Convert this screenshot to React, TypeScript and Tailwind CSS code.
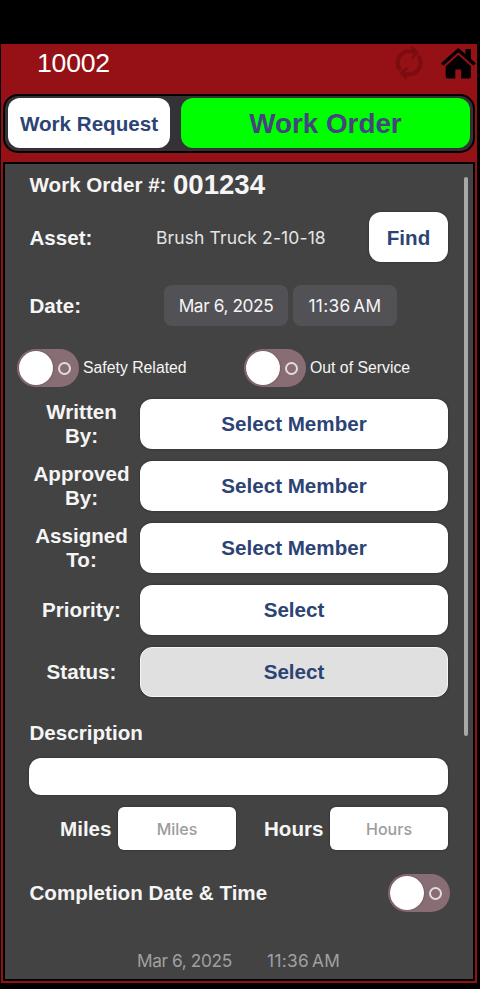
import React, { useState } from 'react';
import { clsx } from 'clsx';

interface SwitchProps {
  on: boolean;
  label: string;
  onChange: () => void;
}

const Switch: React.FC<SwitchProps> = ({ on, label, onChange }) => (
  <button
    role="switch"
    aria-checked={on}
    aria-label={label}
    onClick={onChange}
    className={clsx(
      'flex h-[38px] w-[62px] shrink-0 items-center justify-between rounded-full bg-[#886d74] pl-[2px] pr-[8px]',
      on && 'flex-row-reverse'
    )}
  >
    <span className="h-[34px] w-[34px] rounded-full bg-white shadow-[0_0_2px_#5c3f48]" />
    <span className="mt-px h-[13px] w-[13px] rounded-full border-2 border-[#e4dcde]" />
  </button>
);

const SELECTS = [
  { label: 'Written By:', value: 'Select Member' },
  { label: 'Approved By:', value: 'Select Member' },
  { label: 'Assigned To:', value: 'Select Member' },
  { label: 'Priority:', value: 'Select' },
  { label: 'Status:', value: 'Select', disabled: true },
];

const App: React.FC = () => {
  const [safety, setSafety] = useState(false);
  const [outOfService, setOutOfService] = useState(false);
  const [completed, setCompleted] = useState(false);

  return (
    <div className="h-[989px] w-[480px] overflow-hidden bg-black pl-px pr-[3px] pt-[44px] font-['Liberation_Sans',Arial,sans-serif] text-[20.6px] leading-6 text-[#f5f5f5]">
      <div className="flex h-[939px] flex-col bg-[#951116] px-[2px]">

        {/* Header */}
        <div className="flex h-[50px] shrink-0 items-start pl-[34px]">
          <h1 className="pt-[3px] text-[26.6px] leading-[32px] tracking-[-0.2px] text-white">10002</h1>
          <div className="ml-auto flex items-start">
            <svg className="mt-[1px] h-[36px] w-[30px]" viewBox="0 0 30 36" fill="none" stroke="#7d0c11">
              <path d="M5.4 25A11.5 11.5 0 0 1 20.5 8" strokeWidth="4" />
              <path d="M23.2 10.8A11.5 11.5 0 0 1 8 27.6" strokeWidth="4" />
              <path d="M16.2 1.8L22.4 7.8L16.6 13.2" strokeWidth="2.6" />
              <path d="M12.4 22.4L6 28L12 34" strokeWidth="2.6" />
            </svg>
            <svg className="ml-[16px] mr-[-1px] mt-[4px] h-[31px] w-[35px]" viewBox="0 0 35 31" fill="#000">
              <path d="M17.3 0L24.5 6V1H30V11L34.8 15.2L32.5 17.7L17.3 4.3L2.3 17.7L0 15.2Z" />
              <path d="M17.3 7L30 18.2V28.5Q30 30.5 28 30.5H20.2V21.5H14.3V30.5H6.7Q4.7 30.5 4.7 28.5V18.2Z" />
            </svg>
          </div>
        </div>

        {/* Tabs */}
        <div className="flex h-[59px] shrink-0 gap-[11px] rounded-[15px] border-2 border-black bg-[#343236] px-[3px] pt-[2px] font-bold">
          <button className="h-[50px] w-[162px] rounded-[12px] bg-white pt-[2px] text-[#2c4475]">Work Request</button>
          <button className="h-[50px] w-[289px] rounded-[12px] bg-[#00ff00] pt-[2px] text-[27.8px] text-[#45447f]">Work Order</button>
        </div>

        {/* Form */}
        <div className="mt-[9px] flex h-[819px] shrink-0 border-2 border-black bg-[#434343]">
          <div className="flex w-[443px] flex-col pl-[24px]">
            <div className="flex h-[40px] items-center pt-[2px] font-bold">
              <span className="ml-[0.5px]">Work Order #:</span>
              <span className="ml-[6.5px] text-[27.6px]">001234</span>
            </div>

            <div className="mt-[8px] flex h-[50px] items-center">
              <span className="w-[127px] pl-[0.5px] pt-[2px] font-bold">Asset:</span>
              <span className="pt-[2px] font-['Inter',sans-serif] text-[17.5px] tracking-[0.12px] text-[#e5e5e5]">Brush Truck 2-10-18</span>
              <button className="ml-auto h-[50px] w-[79px] rounded-[12px] bg-white pt-[2px] font-bold text-[#2c4475] shadow-[0_0_2px_#222]">Find</button>
            </div>

            <div className="mt-[23px] flex h-[41px] items-center">
              <span className="w-[135px] pl-[0.5px] font-bold">Date:</span>
              <button className="h-[41px] w-[124px] rounded-[8px] bg-[#525156] font-['Inter',sans-serif] text-[17.3px] tracking-[-0.4px]">Mar 6, 2025</button>
              <button className="ml-[5px] h-[41px] w-[104px] rounded-[8px] bg-[#525156] font-['Inter',sans-serif] text-[17.3px] tracking-[0.35px] [word-spacing:-2.5px]">11:36 AM</button>
            </div>

            <div className="ml-[-12px] mt-[23px] flex h-[38px] items-center text-[15.8px]">
              <Switch on={safety} label="Safety Related" onChange={() => setSafety(!safety)} />
              <span className="ml-[4px] w-[161px]">Safety Related</span>
              <Switch on={outOfService} label="Out of Service" onChange={() => setOutOfService(!outOfService)} />
              <span className="ml-[4px]">Out of Service</span>
            </div>

            <div className="mt-[12px] flex flex-col gap-[12px] font-bold">
              {SELECTS.map((s) => (
                <div key={s.label} className="flex h-[50px] items-center">
                  <span className="w-[105px] text-center">{s.label}</span>
                  <button
                    className={clsx(
                      'ml-[6px] h-[50px] w-[308px] rounded-[12px] text-[#2c4475] shadow-[0_0_2px_#222]',
                      s.disabled ? 'border border-[#f5f5f5] bg-[#e0e0e0]' : 'bg-white'
                    )}
                  >
                    {s.value}
                  </button>
                </div>
              ))}
            </div>

            <label htmlFor="description" className="mt-[24px] block pl-[0.5px] font-bold">Description</label>
            <input id="description" className="mt-[13px] h-[37px] w-[419px] rounded-[12px] bg-white px-3 text-black shadow-[0_0_2px_#222] outline-none" />

            <div className="mt-[12px] flex h-[43px] items-center pl-[31px] font-bold">
              <span className="w-[58px]">Miles</span>
              <input
                placeholder="Miles"
                className="h-[43px] w-[118px] rounded-[6px] bg-white text-center font-['Inter',sans-serif] text-[16px] font-medium text-black shadow-[0_0_2px_#222] outline-none placeholder:text-[#9c9c9c]"
              />
              <span className="ml-[28px] w-[66px]">Hours</span>
              <input
                placeholder="Hours"
                className="h-[43px] w-[118px] rounded-[6px] bg-white text-center font-['Inter',sans-serif] text-[16px] font-medium text-black shadow-[0_0_2px_#222] outline-none placeholder:text-[#9c9c9c]"
              />
            </div>

            <div className="mr-[-2px] mt-[24px] flex h-[38px] items-center justify-between font-bold">
              <span className="pl-[0.5px]">Completion Date &amp; Time</span>
              <Switch on={completed} label="Completion" onChange={() => setCompleted(!completed)} />
            </div>

            <div className="mt-[37px] flex pl-[108px] font-['Inter',sans-serif] text-[17.3px] text-[#a0a0a0]">
              <span className="w-[130px] tracking-[-0.4px]">Mar 6, 2025</span>
              <span className="tracking-[0.35px] [word-spacing:-2.5px]">11:36 AM</span>
            </div>
          </div>

          {/* Scroll thumb */}
          <div className="ml-[16px] mt-[13px] h-[559px] w-[4px] rounded-full bg-[#a9a9a9]" />
        </div>
      </div>
    </div>
  );
};

export default App;
